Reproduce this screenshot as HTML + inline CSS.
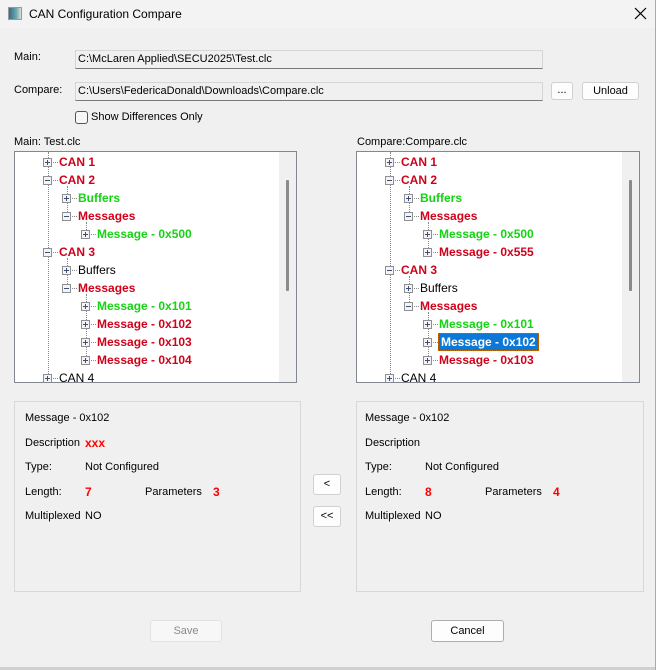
<!DOCTYPE html><html><head><style>
*{margin:0;padding:0;box-sizing:border-box}
body{width:658px;height:670px;background:#f0f0f0;font-family:"Liberation Sans",sans-serif;font-size:11px;color:#000;position:relative;overflow:hidden}
.a{position:absolute;white-space:nowrap}
.tb{position:absolute;background:#f0f0f0;border:1px solid #d6d6d6;border-bottom:1px solid #7a7a7a;padding:2px 2px;font-size:11px}
.btn{position:absolute;background:#fdfdfd;border:1px solid #d0d0d0;border-radius:3px;text-align:center;font-size:11px}
.tree{position:absolute;background:#fff;border:1px solid #828790;overflow:hidden}
.sb{position:absolute;right:0;top:0;width:17px;bottom:0;background:#f0f0f0}
.th{position:absolute;left:7px;width:3px;background:#8a8a8a;border-radius:1px}
.r{position:absolute;height:18px;line-height:18px;white-space:nowrap}
.bx{position:absolute;width:9px;height:9px;border:1px solid #8f8f8f;background:#f4f4f4;top:5px}
.bx:before{content:"";position:absolute;left:1px;top:3px;width:5px;height:1px;background:#3c4f7c}
.p:after{content:"";position:absolute;left:3px;top:1px;width:1px;height:5px;background:#3c4f7c}
.red{color:#d0021b;font-weight:bold;font-size:12px}
.grn{color:#14d314;font-weight:bold;font-size:12px}
.vl{position:absolute;border-left:1px dotted #888;width:0}
.hl{position:absolute;border-top:1px dotted #888;height:0;width:5px}
.pan{position:absolute;border:1px solid #d8d8d8;background:#f0f0f0}
.rv{color:#f00;font-weight:bold;font-size:12px}
</style></head><body>
<div class="a" style="left:0;top:0;width:658px;height:28px;background:#f3f3f3"></div>
<div class="a" style="left:8px;top:7px;width:14px;height:13px;border:1px solid #999;background:linear-gradient(90deg,#3a6a8a,#6aa 60%,#ddd)"></div>
<div class="a" style="left:29px;top:7px;font-size:12px">CAN Configuration Compare</div>
<svg class="a" style="left:634px;top:7px" width="13" height="13"><path d="M1 1L12 12M12 1L1 12" stroke="#000" stroke-width="1.2"/></svg>
<div class="a" style="left:655px;top:0;width:3px;height:670px;background:#fff;border-left:1px solid #aaa"></div>

<div class="a" style="left:14px;top:51px">Main:</div>
<div class="tb" style="left:75px;top:50px;width:468px;height:19px">C:\McLaren Applied\SECU2025\Test.clc</div>
<div class="a" style="left:14px;top:84px">Compare:</div>
<div class="tb" style="left:75px;top:82px;width:468px;height:19px">C:\Users\FedericaDonald\Downloads\Compare.clc</div>
<div class="btn" style="left:551px;top:82px;width:22px;height:18px;line-height:15px">...</div>
<div class="btn" style="left:582px;top:82px;width:57px;height:18px;line-height:16px">Unload</div>
<div class="a" style="left:75px;top:111px;width:13px;height:13px;border:1px solid #555;border-radius:3px;background:#f7f7f7"></div>
<div class="a" style="left:91px;top:111px">Show Differences Only</div>

<div class="a" style="left:14px;top:136px">Main: Test.clc</div>
<div class="a" style="left:357px;top:136px">Compare:Compare.clc</div>

<div class="tree" style="left:14px;top:151px;width:283px;height:232px">
<div class="sb"><div class="th" style="top:28px;height:111px"></div></div>
<div class="vl" style="left:33px;top:0;height:232px"></div>
<div class="vl" style="left:52px;top:34px;height:28px"></div>
<div class="vl" style="left:52px;top:106px;height:28px"></div>
<div class="vl" style="left:71px;top:70px;height:10px"></div>
<div class="vl" style="left:71px;top:142px;height:64px"></div>
<div class="r" style="top:1px;left:0"><div class="bx p" style="left:28px"></div><div class="hl" style="left:38px;top:9px"></div><span class="red a" style="left:44px">CAN 1</span></div>
<div class="r" style="top:19px;left:0"><div class="bx" style="left:28px"></div><div class="hl" style="left:38px;top:9px"></div><span class="red a" style="left:44px">CAN 2</span></div>
<div class="r" style="top:37px;left:0"><div class="bx p" style="left:47px"></div><div class="hl" style="left:57px;top:9px"></div><span class="grn a" style="left:63px">Buffers</span></div>
<div class="r" style="top:55px;left:0"><div class="bx" style="left:47px"></div><div class="hl" style="left:57px;top:9px"></div><span class="red a" style="left:63px">Messages</span></div>
<div class="r" style="top:73px;left:0"><div class="bx p" style="left:66px"></div><div class="hl" style="left:76px;top:9px"></div><span class="grn a" style="left:82px">Message - 0x500</span></div>
<div class="r" style="top:91px;left:0"><div class="bx" style="left:28px"></div><div class="hl" style="left:38px;top:9px"></div><span class="red a" style="left:44px">CAN 3</span></div>
<div class="r" style="top:109px;left:0"><div class="bx p" style="left:47px"></div><div class="hl" style="left:57px;top:9px"></div><span class="a" style="left:63px;font-size:12px">Buffers</span></div>
<div class="r" style="top:127px;left:0"><div class="bx" style="left:47px"></div><div class="hl" style="left:57px;top:9px"></div><span class="red a" style="left:63px">Messages</span></div>
<div class="r" style="top:145px;left:0"><div class="bx p" style="left:66px"></div><div class="hl" style="left:76px;top:9px"></div><span class="grn a" style="left:82px">Message - 0x101</span></div>
<div class="r" style="top:163px;left:0"><div class="bx p" style="left:66px"></div><div class="hl" style="left:76px;top:9px"></div><span class="red a" style="left:82px">Message - 0x102</span></div>
<div class="r" style="top:181px;left:0"><div class="bx p" style="left:66px"></div><div class="hl" style="left:76px;top:9px"></div><span class="red a" style="left:82px">Message - 0x103</span></div>
<div class="r" style="top:199px;left:0"><div class="bx p" style="left:66px"></div><div class="hl" style="left:76px;top:9px"></div><span class="red a" style="left:82px">Message - 0x104</span></div>
<div class="r" style="top:217px;left:0"><div class="bx p" style="left:28px"></div><div class="hl" style="left:38px;top:9px"></div><span class="a" style="left:44px;font-size:12px">CAN 4</span></div>
</div>

<div class="tree" style="left:356px;top:151px;width:284px;height:232px">
<div class="sb"><div class="th" style="top:28px;height:111px"></div></div>
<div class="vl" style="left:33px;top:0;height:232px"></div>
<div class="vl" style="left:52px;top:34px;height:28px"></div>
<div class="vl" style="left:52px;top:124px;height:28px"></div>
<div class="vl" style="left:71px;top:70px;height:28px"></div>
<div class="vl" style="left:71px;top:160px;height:46px"></div>
<div class="r" style="top:1px;left:0"><div class="bx p" style="left:28px"></div><div class="hl" style="left:38px;top:9px"></div><span class="red a" style="left:44px">CAN 1</span></div>
<div class="r" style="top:19px;left:0"><div class="bx" style="left:28px"></div><div class="hl" style="left:38px;top:9px"></div><span class="red a" style="left:44px">CAN 2</span></div>
<div class="r" style="top:37px;left:0"><div class="bx p" style="left:47px"></div><div class="hl" style="left:57px;top:9px"></div><span class="grn a" style="left:63px">Buffers</span></div>
<div class="r" style="top:55px;left:0"><div class="bx" style="left:47px"></div><div class="hl" style="left:57px;top:9px"></div><span class="red a" style="left:63px">Messages</span></div>
<div class="r" style="top:73px;left:0"><div class="bx p" style="left:66px"></div><div class="hl" style="left:76px;top:9px"></div><span class="grn a" style="left:82px">Message - 0x500</span></div>
<div class="r" style="top:91px;left:0"><div class="bx p" style="left:66px"></div><div class="hl" style="left:76px;top:9px"></div><span class="red a" style="left:82px">Message - 0x555</span></div>
<div class="r" style="top:109px;left:0"><div class="bx" style="left:28px"></div><div class="hl" style="left:38px;top:9px"></div><span class="red a" style="left:44px">CAN 3</span></div>
<div class="r" style="top:127px;left:0"><div class="bx p" style="left:47px"></div><div class="hl" style="left:57px;top:9px"></div><span class="a" style="left:63px;font-size:12px">Buffers</span></div>
<div class="r" style="top:145px;left:0"><div class="bx" style="left:47px"></div><div class="hl" style="left:57px;top:9px"></div><span class="red a" style="left:63px">Messages</span></div>
<div class="r" style="top:163px;left:0"><div class="bx p" style="left:66px"></div><div class="hl" style="left:76px;top:9px"></div><span class="grn a" style="left:82px">Message - 0x101</span></div>
<div class="r" style="top:181px;left:0"><div class="bx p" style="left:66px"></div><div class="hl" style="left:76px;top:9px"></div><span class="a" style="left:81px;top:0;height:18px;padding:0 2px;background:#0b78d7;color:#fff;font-weight:bold;font-size:12px;border:1px dotted #c60;line-height:16px">Message - 0x102</span></div>
<div class="r" style="top:199px;left:0"><div class="bx p" style="left:66px"></div><div class="hl" style="left:76px;top:9px"></div><span class="red a" style="left:82px">Message - 0x103</span></div>
<div class="r" style="top:217px;left:0"><div class="bx p" style="left:28px"></div><div class="hl" style="left:38px;top:9px"></div><span class="a" style="left:44px;font-size:12px">CAN 4</span></div>
</div>

<div class="pan" style="left:14px;top:401px;width:287px;height:191px">
<div class="a" style="left:10px;top:10px">Message - 0x102</div>
<div class="a" style="left:10px;top:35px">Description</div><div class="a rv" style="left:70px;top:34px">xxx</div>
<div class="a" style="left:10px;top:59px">Type:</div><div class="a" style="left:70px;top:59px">Not Configured</div>
<div class="a" style="left:10px;top:84px">Length:</div><div class="a rv" style="left:70px;top:83px">7</div>
<div class="a" style="left:130px;top:84px">Parameters</div><div class="a rv" style="left:198px;top:83px">3</div>
<div class="a" style="left:10px;top:108px">Multiplexed</div><div class="a" style="left:70px;top:108px">NO</div>
</div>
<div class="pan" style="left:356px;top:401px;width:288px;height:191px">
<div class="a" style="left:8px;top:10px">Message - 0x102</div>
<div class="a" style="left:8px;top:35px">Description</div>
<div class="a" style="left:8px;top:59px">Type:</div><div class="a" style="left:68px;top:59px">Not Configured</div>
<div class="a" style="left:8px;top:84px">Length:</div><div class="a rv" style="left:68px;top:83px">8</div>
<div class="a" style="left:128px;top:84px">Parameters</div><div class="a rv" style="left:196px;top:83px">4</div>
<div class="a" style="left:8px;top:108px">Multiplexed</div><div class="a" style="left:68px;top:108px">NO</div>
</div>
<div class="btn" style="left:313px;top:474px;width:28px;height:21px;line-height:19px">&lt;</div>
<div class="btn" style="left:313px;top:506px;width:28px;height:21px;line-height:19px">&lt;&lt;</div>
<div class="btn" style="left:150px;top:620px;width:72px;height:22px;line-height:20px;color:#8a8a8a;background:#f7f7f7;border-color:#e2e2e2">Save</div>
<div class="btn" style="left:431px;top:620px;width:73px;height:22px;line-height:20px;border-color:#adadad">Cancel</div>
<div class="a" style="left:0;top:667px;width:655px;height:3px;background:#d0d0d0"></div>
</body></html>
